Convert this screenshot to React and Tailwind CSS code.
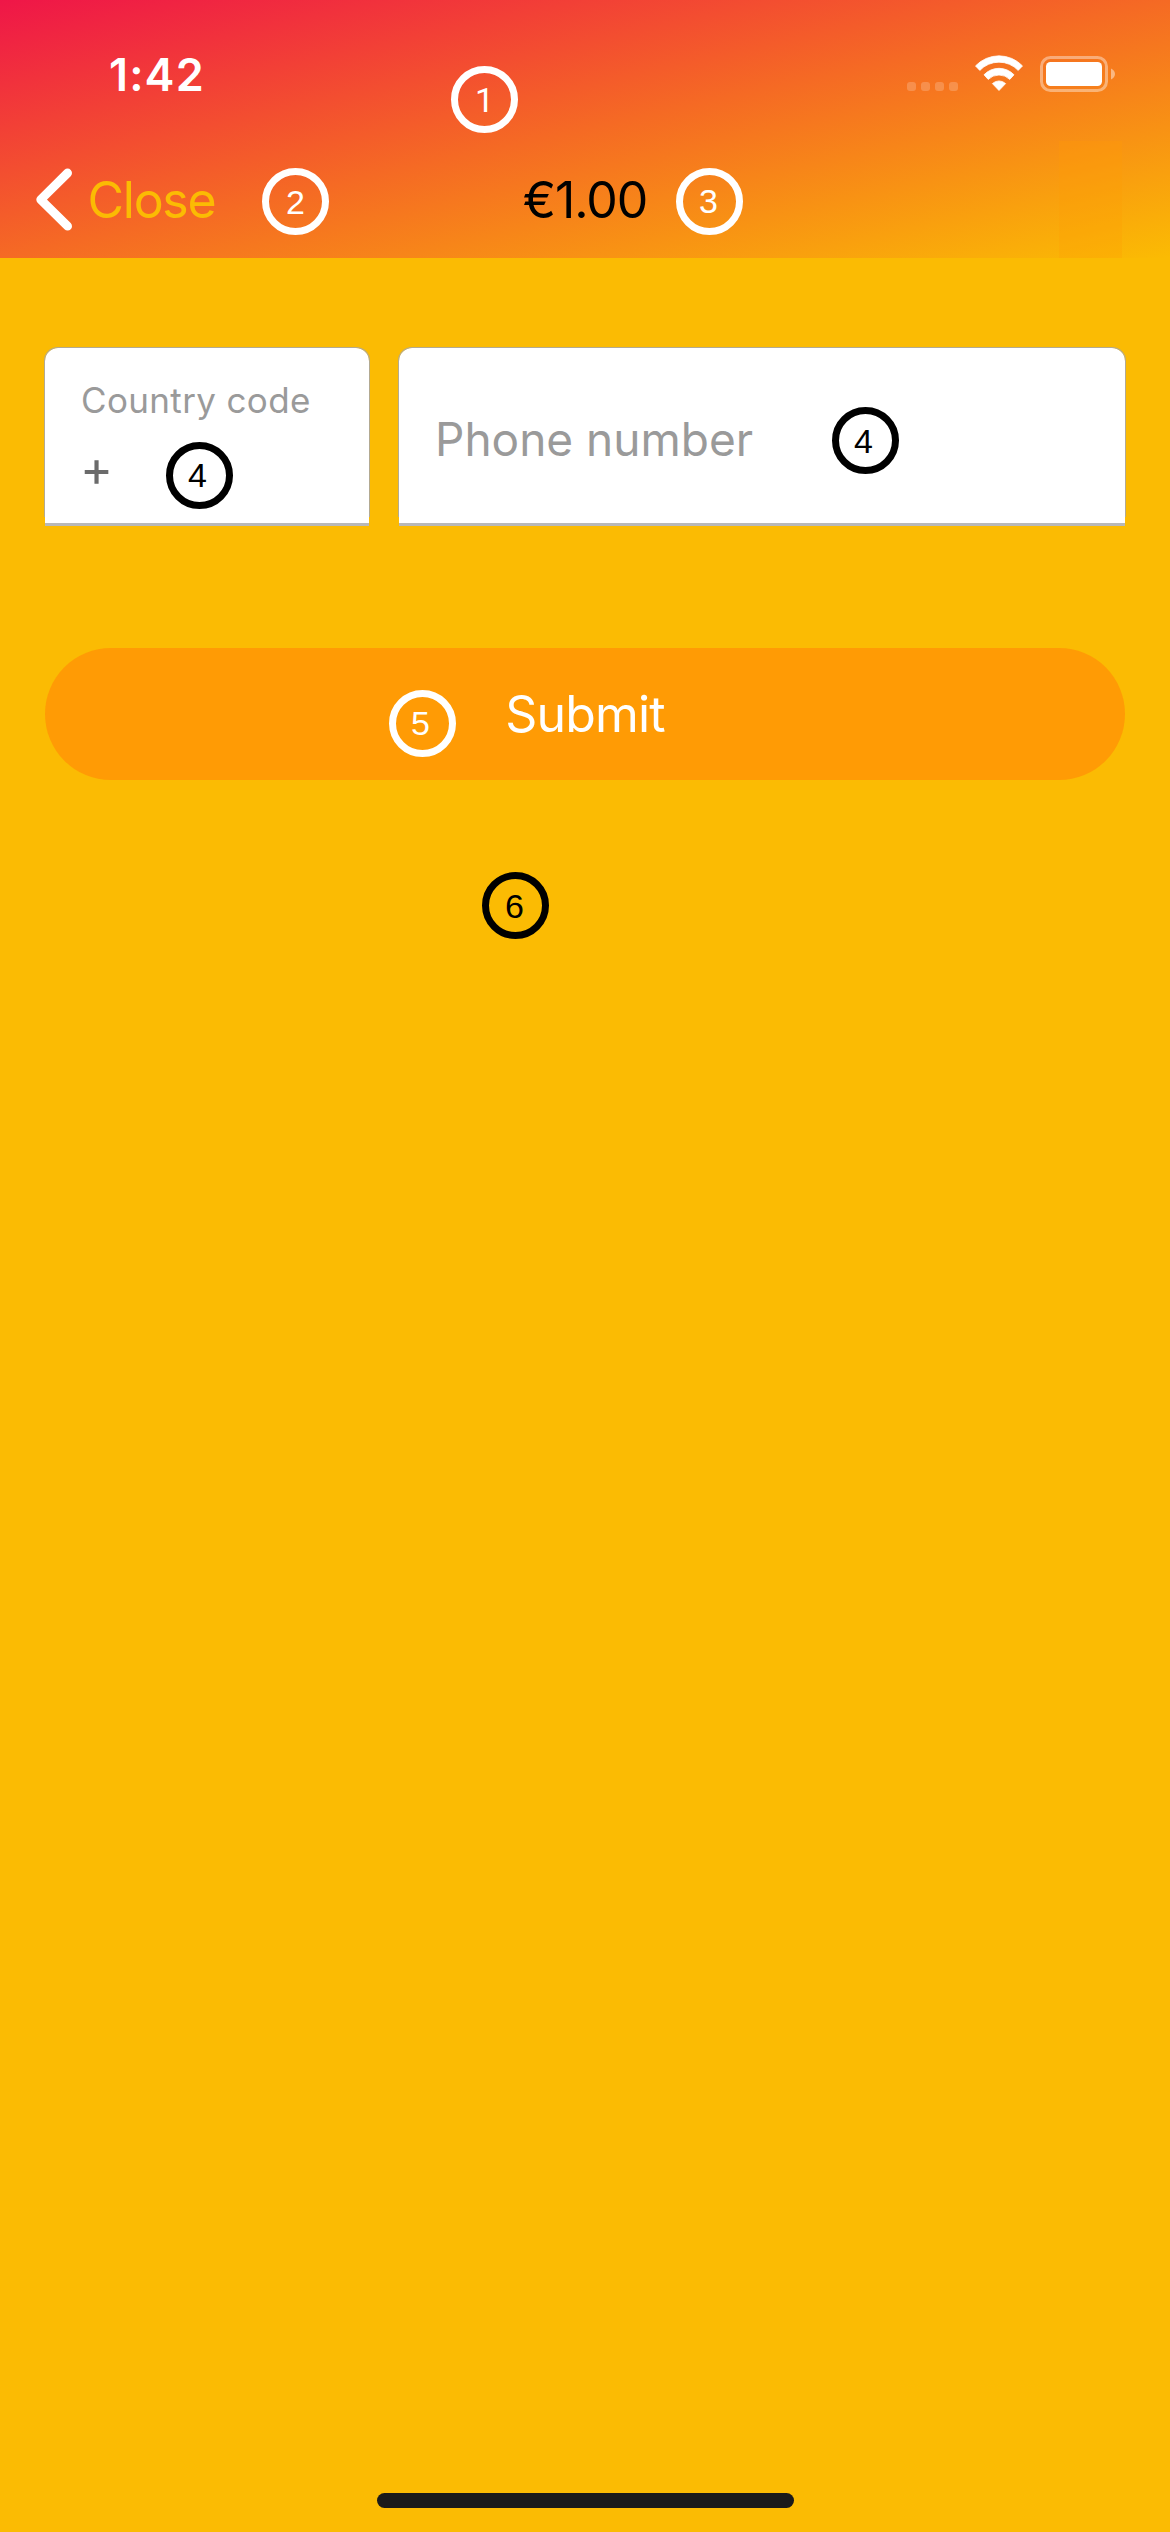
const badges = [
  { n: "1", place: "left-[451px] top-[66px] border-white text-white", digit: "font-['Roboto']" },
  { n: "2", place: "left-[262px] top-[168px] border-white text-white", digit: "" },
  { n: "3", place: "left-[676px] top-[168px] border-white text-white", digit: "translate-x-[-1px] translate-y-[-1px]" },
  { n: "4", place: "left-[166px] top-[442px] border-black text-black", digit: "translate-x-[-2px] translate-y-[-1px]" },
  { n: "4", place: "left-[832px] top-[407px] border-black text-black", digit: "translate-x-[-2px]" },
  { n: "5", place: "left-[389px] top-[690px] border-white text-white", digit: "translate-x-[-2px] translate-y-[-1px]" },
  { n: "6", place: "left-[482px] top-[872px] border-black text-black", digit: "translate-x-[-1px]" },
];

function Badge({ n, place, digit }) {
  return (
    <div className={`absolute flex size-[67px] items-center justify-center rounded-full border-[7px] ${place}`}>
      <span className={`text-[34px] leading-[34px] ${digit}`}>{n}</span>
    </div>
  );
}

function StatusIcons() {
  return (
    <div className="flex items-end pr-[55px]">
      <div className="mb-px flex gap-[5px]">
        <i className="size-[9px] rounded-[3px] bg-white/20" />
        <i className="size-[9px] rounded-[3px] bg-white/20" />
        <i className="size-[9px] rounded-[3px] bg-white/20" />
        <i className="size-[9px] rounded-[3px] bg-white/20" />
      </div>
      <svg className="ml-[17px] h-[37px] w-[48px]" viewBox="975 55 48 37" fill="white" stroke="white" strokeWidth="0.8" strokeLinejoin="round">
        <path d="M975.5 65.9A32.5 32.5 0 0 1 1022.5 65.9L1018.2 70.4A26.5 26.5 0 0 0 979.8 70.4Z" />
        <path d="M984 74.8A20.6 20.6 0 0 1 1014 74.8L1009.8 79.4A15.5 15.5 0 0 0 988.2 79.4Z" />
        <path d="M992.4 83.6A9.5 9.5 0 0 1 1005.6 83.6L999 90.5Z" />
      </svg>
      <svg className="ml-[17px] h-[36px] w-[75px]" viewBox="0 0 75 36" fill="none">
        <rect x="1.5" y="1.5" width="65" height="33" rx="9" stroke="white" strokeOpacity="0.4" strokeWidth="3" />
        <rect x="6" y="6" width="56" height="24" rx="4.5" fill="white" />
        <path d="M71 12.5C73.4 13.5 75 15.5 75 18S73.4 22.5 71 23.5Z" fill="white" fillOpacity="0.45" />
      </svg>
    </div>
  );
}

function Field({ className, children }) {
  return (
    <div className={`relative h-[178px] rounded-t-[13px] border-b-[3px] border-[#b8b8b8] bg-white px-[36px] ${className}`}>
      <div className="pointer-events-none absolute -inset-x-px -top-px bottom-[6px] rounded-t-[14px] border border-b-0 border-[#b3aa91]" />
      {children}
    </div>
  );
}

export default function App() {
  return (
    <div className="relative flex h-[2532px] w-[1170px] flex-col overflow-hidden bg-[#fbbb03] font-['Inter',sans-serif]">
      <header className="flex h-[258px] shrink-0 flex-col bg-[linear-gradient(to_bottom_right,#ef1648,#f56a24_50%,#fbbb03)]">
        <div className="flex h-[126px] items-start justify-between">
          <time className="mt-[48px] ml-[109px] text-[45px] leading-[54px] font-semibold tracking-[1.1px] text-white">1:42</time>
          <div className="mt-[55px]">
            <StatusIcons />
          </div>
        </div>
        <div className="grid h-[132px] grid-cols-[1fr_auto_1fr]">
          <button className="mt-[42px] ml-[36px] flex h-[63px] items-start text-left">
            <svg className="h-[63px] w-[37px]" viewBox="36 168 37 63" fill="none" stroke="white" strokeWidth="8.8" strokeLinecap="round" strokeLinejoin="round">
              <path d="M67.6 173L40.7 199.6L67.6 226.2" />
            </svg>
            <span className="mt-[2px] ml-[14.5px] text-[50px] leading-[60px] tracking-[-1.25px] text-[#fbbb03]">Close</span>
          </button>
          <h1 className="mt-[44px] text-[50px] leading-[60px] tracking-[-1.1px] text-black">€1.00</h1>
          <div className="mr-[48px] h-[117px] w-[63px] self-end justify-self-end bg-[#ff9b05]/25" />
        </div>
      </header>

      <main className="flex flex-1 flex-col px-[45px] pt-[90px]">
        <div className="flex gap-[30px]">
          <Field className="w-[324px] pt-[31px]">
            <div className="text-[35px] leading-[42px] tracking-[0.36px] whitespace-nowrap text-[#9a9a9a]">Country code</div>
            <div className="mt-[17px] -ml-[1px] text-[50px] leading-[60px] text-[#6b6b6b]">+</div>
          </Field>
          <Field className="flex-1 pt-[63px]">
            <div className="text-[46px] leading-[56px] text-[#9a9a9a]">Phone number</div>
          </Field>
        </div>
        <button className="mt-[122px] flex h-[132px] items-center justify-center rounded-full bg-[#ff9b05] text-[50px] leading-[60px] tracking-[-0.8px] text-white">
          Submit
        </button>
      </main>

      <footer className="flex h-[39px] shrink-0 items-start justify-center">
        <div className="h-[15px] w-[417px] rounded-full bg-[#1a1a1a]" />
      </footer>

      <div className="pointer-events-none absolute inset-0 font-['Liberation_Sans',sans-serif]">
        {badges.map((b, i) => (
          <Badge key={i} {...b} />
        ))}
      </div>
    </div>
  );
}
